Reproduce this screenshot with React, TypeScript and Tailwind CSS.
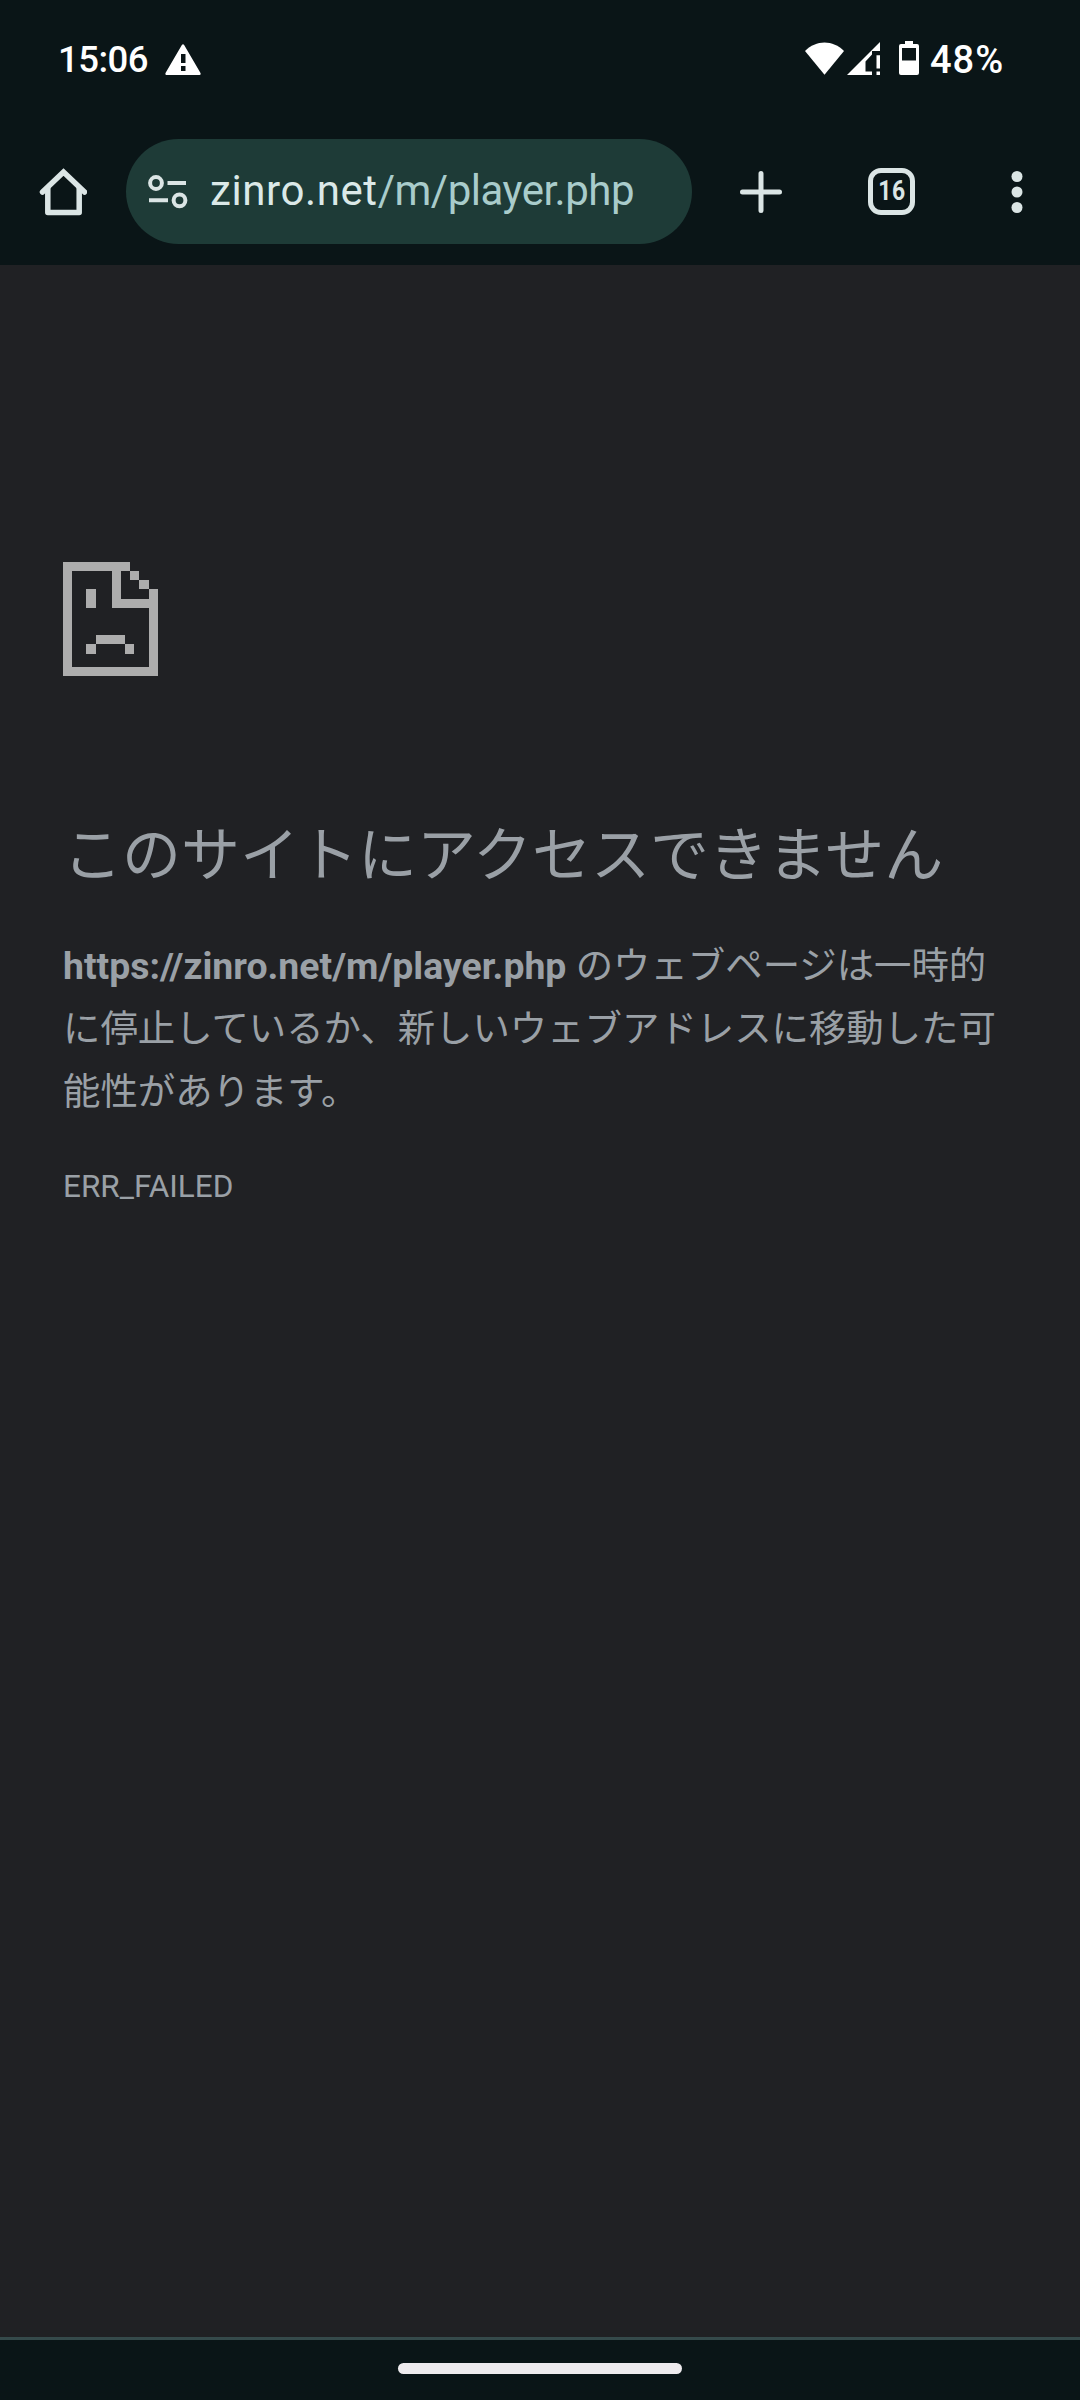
import type { ReactNode } from 'react'

const PAGE_URL = 'https://zinro.net/m/player.php'

function StatusBar() {
  return (
    <div className="flex h-[116px] items-center pl-[58px] pr-[75px] font-['Roboto',sans-serif] text-[36.500px] font-medium leading-none text-white">
      <span className="w-[91px] whitespace-nowrap pt-1 tracking-[-0.500px]">15:06</span>
      <svg className="ml-4 mt-[3px] h-8 w-9" viewBox="0 0 36 32" fill="currentColor">
        <path
          fillRule="evenodd"
          d="M17 .8Q18 -.4 19 .8L35.500 29Q36 31 34.500 31H1.500Q0 31 .5 29ZM16 10V19H20.500V10ZM16 22V27H20.500V22Z"
        />
      </svg>

      <div className="ml-auto flex items-center">
        <svg className="h-[34px] w-[115px]" viewBox="0 0 115 34" fill="currentColor">
          {/* wifi */}
          <path d="M0 10C11-1.500 28-1.500 39 10L19.500 33.700Z" />
          {/* mobile signal without data */}
          <path d="M42 34 75 1V10H67V13.500L60.500 20.500V30.500H67V34ZM71.500 14.300H75V27.500H71.500ZM71.500 30.500H75V34H71.500Z" />
          {/* battery */}
          <path
            fillRule="evenodd"
            d="M100 0H108V3H112Q114 3 114 5V32Q114 34 112 34H96Q94 34 94 32V5Q94 3 96 3H100ZM97 7V19.500H111V7Z"
          />
        </svg>
        <span className="ml-2.5 w-[75px] whitespace-nowrap pt-[3px] text-[38px] tracking-[1px]">48%</span>
      </div>
    </div>
  )
}

function IconButton({ label, className, children }: { label: string; className: string; children: ReactNode }) {
  return (
    <button aria-label={label} className={`flex shrink-0 items-center justify-center ${className}`}>
      {children}
    </button>
  )
}

function Toolbar() {
  return (
    <div className="mt-0.5 flex h-[147px] items-center text-[#dbe5e5]">
      <IconButton label="ホーム" className="w-[126px]">
        <svg className="h-12 w-12" viewBox="0 0 48 48" fill="none" stroke="currentColor" strokeWidth="5.500" strokeLinecap="round" strokeLinejoin="round">
          <path d="M3.500 24 24.500 4 45.500 24" strokeLinejoin="miter" />
          <path d="M8.800 20V44.500H40.200V20" />
        </svg>
      </IconButton>

      <div className="flex h-[105px] w-[566px] shrink-0 items-center rounded-full bg-[#1e3b37] pl-[22px]">
        <svg className="h-[34px] w-10" viewBox="0 0 40 34" fill="none" stroke="currentColor" strokeWidth="4">
          <circle cx="8" cy="8" r="5.900" />
          <path d="M19.500 8H38M1 25.300H20" />
          <circle cx="31.500" cy="25.300" r="5.900" />
        </svg>
        <span className="ml-[22px] whitespace-nowrap pb-0.5 font-['Roboto',sans-serif] text-[42px] leading-none tracking-[-0.500px] text-[#a9cccb]">
          <span className="tracking-[0.600px] text-[#dbe9e8]">zinro.net</span>/m/player.php
        </span>
      </div>

      <IconButton label="新しいタブ" className="w-[137px]">
        <svg className="h-[42px] w-[42px]" viewBox="0 0 42 42" stroke="currentColor" strokeWidth="5" strokeLinecap="round">
          <path d="M21 2.500V39.500M2.500 21H39.500" />
        </svg>
      </IconButton>
      <IconButton label="タブ一覧" className="w-[125px]">
        <span className="flex h-[47px] w-[47px] items-center justify-center rounded-[13px] border-[5px] border-current font-['Roboto',sans-serif] text-[27px] font-bold leading-none">
          <span className="scale-x-85 pl-px pb-px tracking-[0.500px]">16</span>
        </span>
      </IconButton>
      <IconButton label="メニュー" className="w-[126px]">
        <svg className="h-[42px] w-3" viewBox="0 0 12 42" fill="currentColor">
          <circle cx="6" cy="5.500" r="5.500" />
          <circle cx="6" cy="21" r="5.500" />
          <circle cx="6" cy="36.500" r="5.500" />
        </svg>
      </IconButton>
    </div>
  )
}

function SadPageIcon() {
  return (
    <svg className="h-[114px] w-[95px]" viewBox="0 0 95 114" fill="#adadad" shapeRendering="crispEdges">
      <path
        fillRule="evenodd"
        d="M0 0H67V9H58V37H86V27H95V114H0ZM9 9V105H86V46H49V9Z"
      />
      <path d="M67 9H76V18H67ZM76 18H86V27H76ZM23 27H33V46H23ZM33 73H62V82H33ZM23 82H33V92H23ZM62 82H71V92H62Z" />
    </svg>
  )
}

export default function App() {
  return (
    <div className="flex h-[2400px] w-[1080px] flex-col overflow-hidden bg-[#0a1517]">
      <StatusBar />
      <Toolbar />

      <main
        lang="ja"
        className="flex-1 bg-[#202124] px-[63px] pt-[297px] font-['Roboto','Noto_Sans_CJK_JP',sans-serif] text-[#9aa0a6]"
      >
        <SadPageIcon />
        <h1 className="mt-[144px] whitespace-nowrap text-[59px] leading-[72px]">このサイトにアクセスできません</h1>
        <p className="mt-[43px] whitespace-nowrap text-[37.400px] leading-[63px]">
          <strong className="font-bold">{PAGE_URL}</strong> のウェブページは一時的
          <br />
          に停止しているか、新しいウェブアドレスに移動した可
          <br />
          能性があります。
        </p>
        <div className="mt-[31px] text-[31.500px] leading-[63px]">ERR_FAILED</div>
      </main>

      <div className="flex h-[63px] items-center justify-center border-t-[3px] border-[#354a4b] pb-[3px]">
        <div className="h-[11px] w-[284px] rounded-full bg-[#eeebee]" />
      </div>
    </div>
  )
}
